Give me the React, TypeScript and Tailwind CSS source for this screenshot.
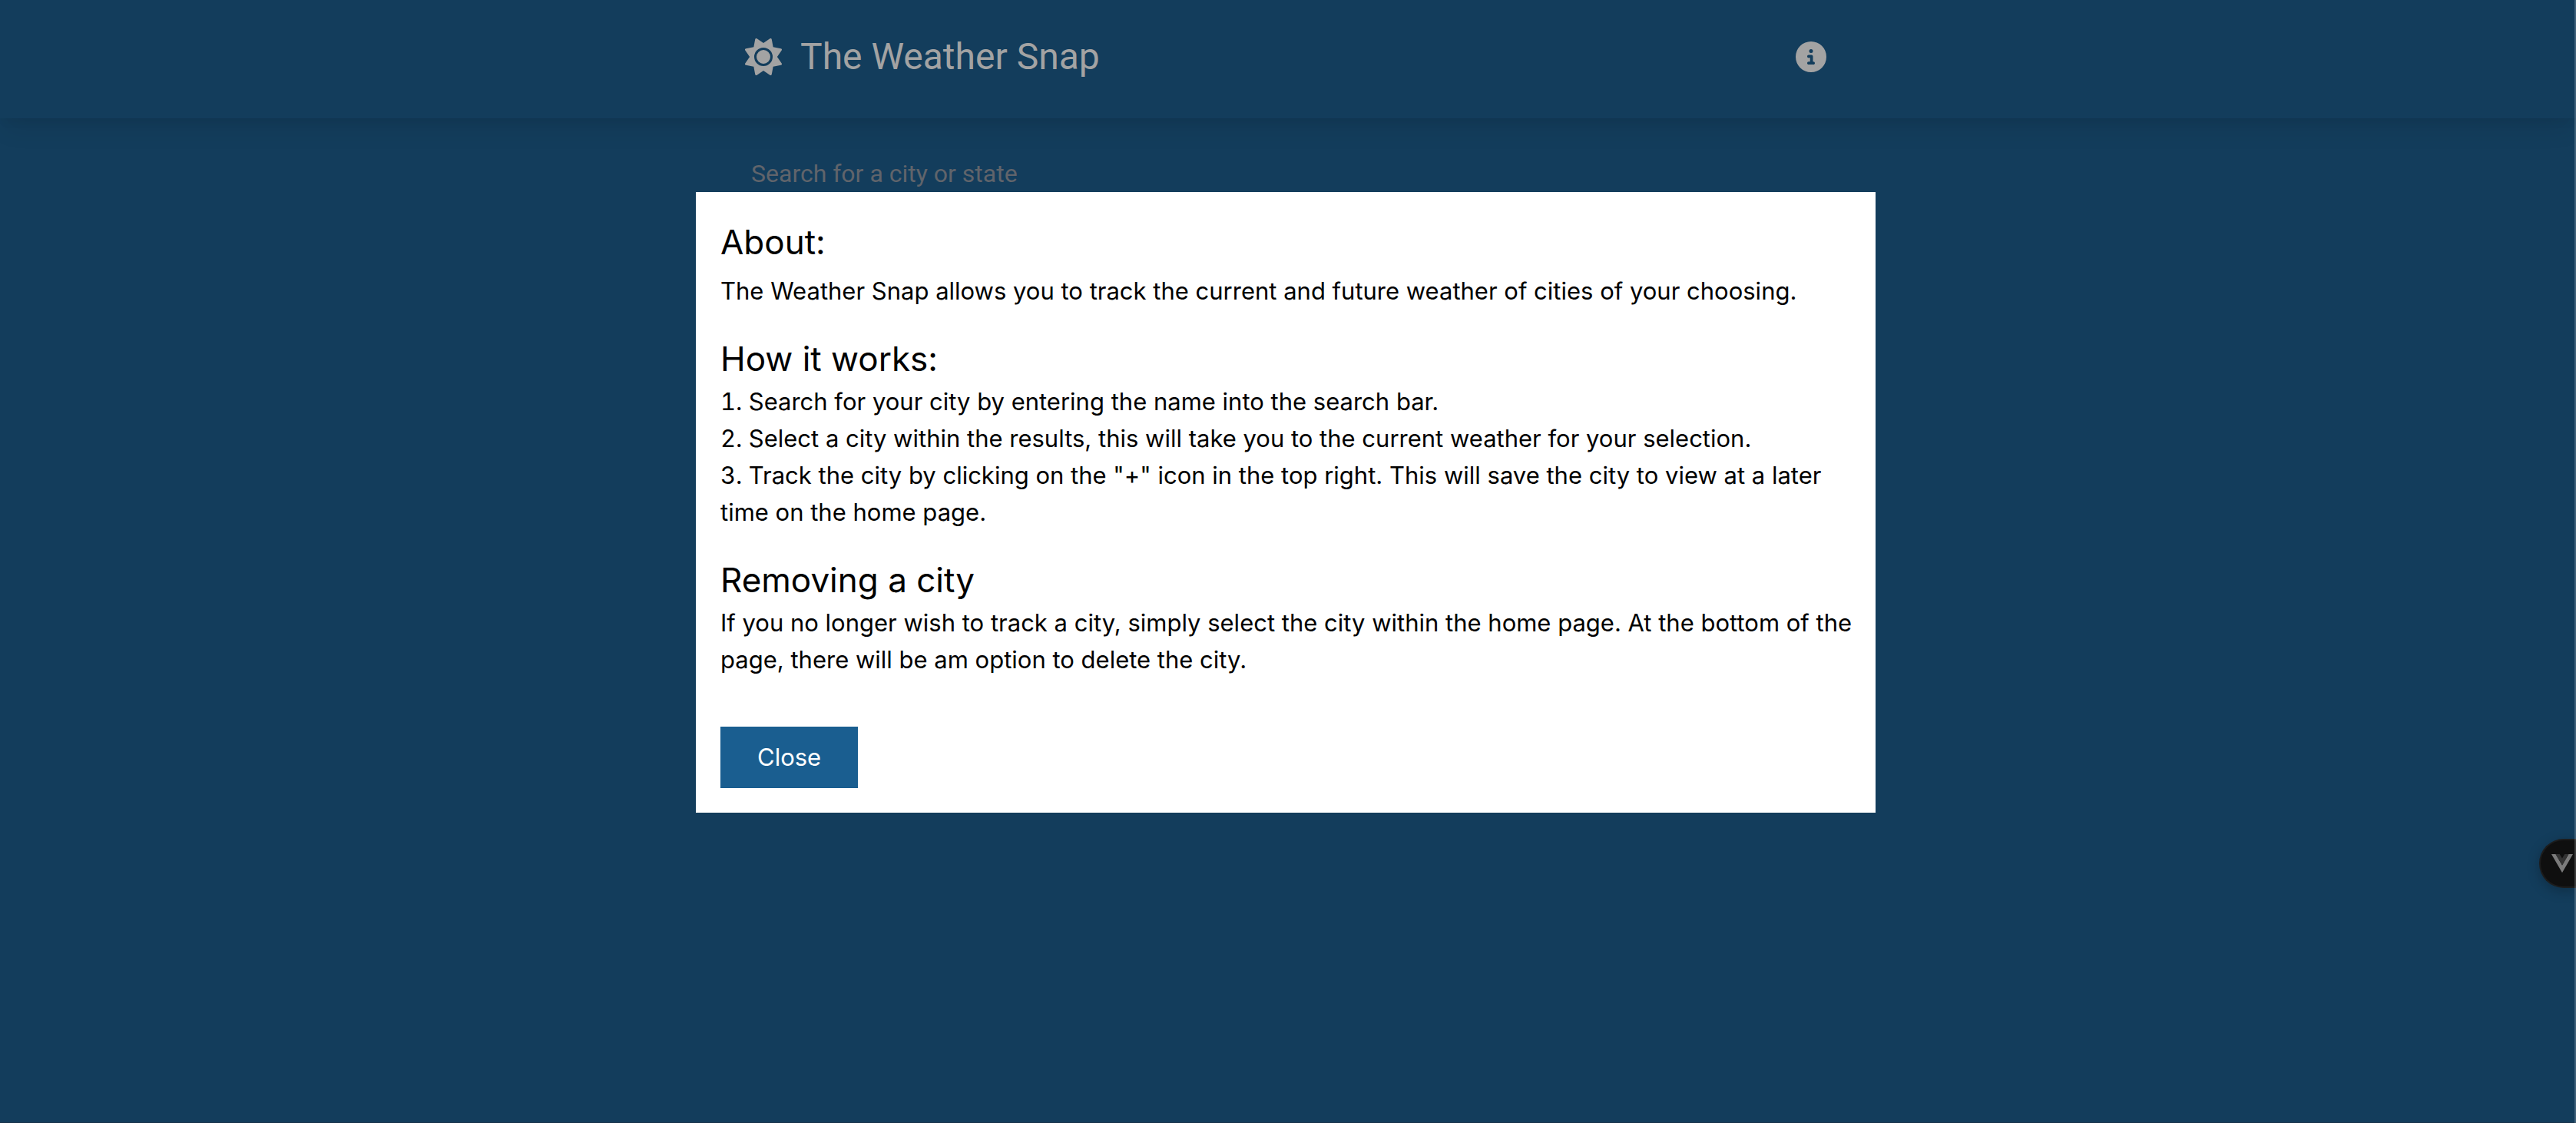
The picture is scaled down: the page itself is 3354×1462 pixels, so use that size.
import { useState } from "react";
import { FaSun, FaCircleInfo } from "react-icons/fa6";

function Header() {
  return (
    <header className="bg-[#133d5c] pt-[42px] pr-[6px] pb-12 shadow-[0_20px_30px_-6px_rgba(0,0,0,0.08),0_8px_12px_-4px_rgba(0,0,0,0.05)]">
      <nav className="mx-auto flex max-w-[1536px] items-center justify-between px-16 text-[#a3a3a3]">
        <a href="#home" className="flex items-center gap-6">
          <FaSun className="size-12" />
          <span className="text-5xl leading-[64px]">The Weather Snap</span>
        </a>
        <button type="button" aria-label="About this app">
          <FaCircleInfo className="size-10" />
        </button>
      </nav>
    </header>
  );
}

function Search() {
  return (
    <main className="pr-[6px]">
      <div className="mx-auto max-w-[1536px] px-16 pt-8">
        <input
          type="text"
          aria-label="Search for a city or state"
          placeholder="Search for a city or state"
          className="w-full border-b-2 border-[#133d5c] bg-transparent px-2 py-4 text-[32px] leading-[48px] placeholder:text-[#60646b] focus:outline-none"
        />
      </div>
    </main>
  );
}

function AboutDialog({ onClose }: { onClose: () => void }) {
  return (
    <div className="fixed inset-0 flex items-start justify-center border-r-2 border-white/20 pt-[250px] pr-1">
      <section
        role="dialog"
        aria-modal="true"
        aria-label="About"
        className="w-full max-w-[1536px] bg-white pt-[33px] pr-4 pb-8 pl-8 font-['Inter',sans-serif] text-[31px] leading-[48px] text-black"
      >
        <h1 className="mb-2 text-[44px] leading-[64px]">About:</h1>
        <p className="mb-8">
          The Weather Snap allows you to track the current and future weather of cities of your choosing.
        </p>
        <h2 className="text-[44px] leading-[64px]">How it works:</h2>
        <ol className="mb-8 list-inside list-decimal">
          <li>Search for your city by entering the name into the search bar.</li>
          <li>Select a city within the results, this will take you to the current weather for your selection.</li>
          <li>
            Track the city by clicking on the "+" icon in the top right. This will save the city to view at a later time
            on the home page.
          </li>
        </ol>
        <h2 className="text-[44px] leading-[64px]">Removing a city</h2>
        <p>
          If you no longer wish to track a city, simply select the city within the home page. At the bottom of the page,
          there will be am option to delete the city.
        </p>
        <button type="button" onClick={onClose} className="mt-[63px] bg-[#1a5e90] px-12 py-4 text-white">
          Close
        </button>
      </section>
    </div>
  );
}

function DevtoolsToggle() {
  return (
    <button
      type="button"
      aria-label="Toggle devtools"
      className="fixed top-[1092px] right-0 flex h-16 w-12 items-center rounded-l-full border-2 border-r-0 border-[#1c1c1c] bg-[#0f0f0f] pl-[14px] shadow-[0_4px_16px_rgba(0,0,0,0.25)]"
    >
      <svg viewBox="0 0 256 221" className="w-7" aria-hidden="true">
        <path fill="#7b7b7b" d="m0 0 128 220.8L256 0h-51.2L128 132.48 50.56 0z" />
        <path fill="#333333" d="M50.56 0 128 133.12 204.8 0h-47.36L128 51.2 97.92 0z" />
      </svg>
    </button>
  );
}

export default function App() {
  const [open, setOpen] = useState(true);
  return (
    <div className="min-h-screen overflow-hidden border-b border-[#17324a] bg-[#133d5c] font-['Roboto',sans-serif]">
      <Header />
      <Search />
      <DevtoolsToggle />
      {open && <AboutDialog onClose={() => setOpen(false)} />}
    </div>
  );
}
